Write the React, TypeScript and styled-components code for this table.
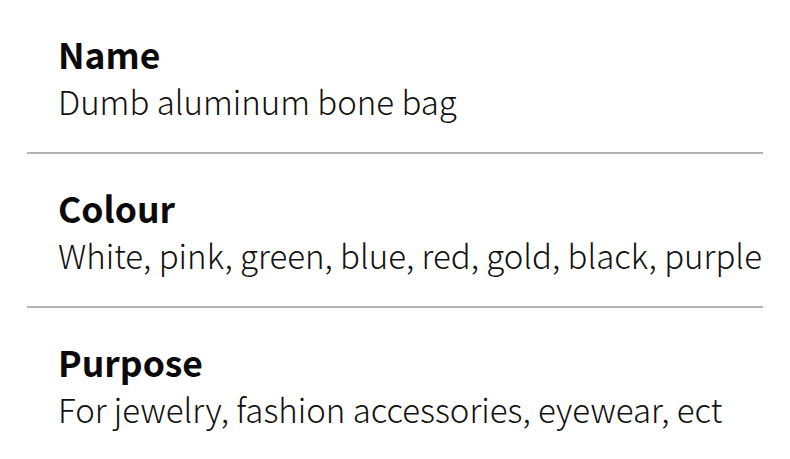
import React from 'react';
import styled, { createGlobalStyle } from 'styled-components';

const GlobalStyle = createGlobalStyle`
  html, body {
    margin: 0;
    padding: 0;
    background: #ffffff;
  }
  body {
    font-family: "Noto Sans CJK SC", "Noto Sans", sans-serif;
  }
`;

const Page = styled.div`
  width: 790px;
  height: 459px;
  overflow: hidden;
  padding: 0 27px;
  box-sizing: border-box;
  background: #ffffff;
`;

const Section = styled.section<{ $last?: boolean }>`
  padding: 31px 0 26px 31px;
  border-bottom: ${(p) => (p.$last ? 'none' : '2px solid #b4b4b4')};
`;

const Label = styled.h3`
  margin: 0;
  font-size: 35.5px;
  line-height: 45px;
  font-weight: 700;
  color: #0a0a0a;
`;

const Value = styled.p`
  margin: 0;
  font-size: 33px;
  line-height: 50px;
  font-weight: 300;
  color: #111111;
  white-space: nowrap;
`;

const specs = [
  { label: 'Name', value: 'Dumb aluminum bone bag' },
  { label: 'Colour', value: 'White, pink, green, blue, red, gold, black, purple' },
  { label: 'Purpose', value: 'For jewelry, fashion accessories, eyewear, ect' },
];

const App = () => {
  return (
    <>
      <GlobalStyle />
      <Page>
        {specs.map((s, i) => (
          <Section key={s.label} $last={i === specs.length - 1}>
            <Label>{s.label}</Label>
            <Value>{s.value}</Value>
          </Section>
        ))}
      </Page>
    </>
  );
};

export default App;
